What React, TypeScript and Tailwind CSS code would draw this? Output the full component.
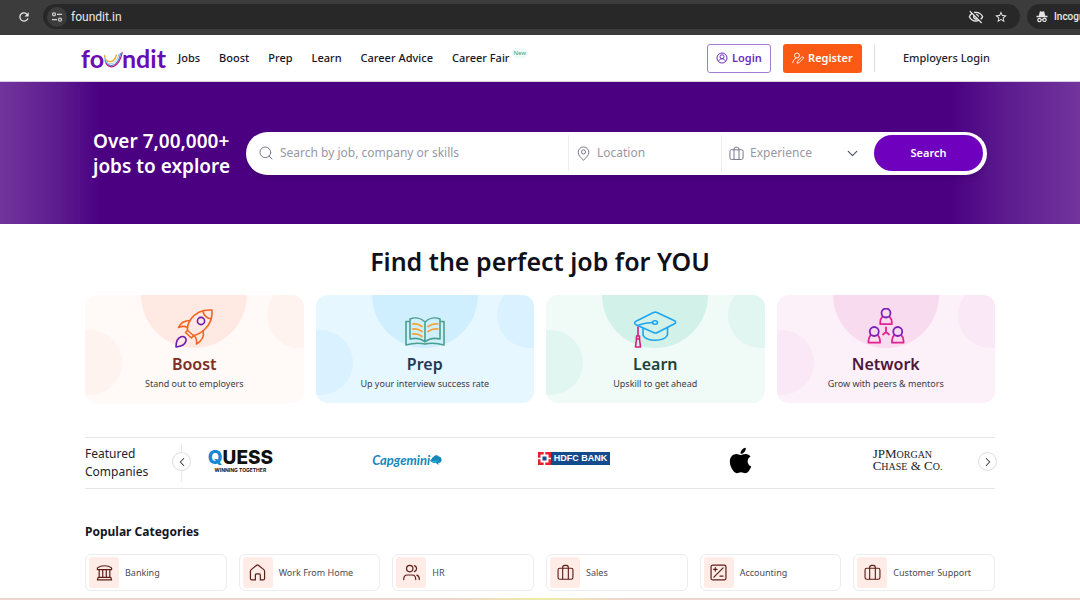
import type { ReactNode } from "react";
import { FaApple } from "react-icons/fa";
import { MdRefresh, MdOutlineVisibilityOff, MdStarBorder } from "react-icons/md";
import { Search, ChevronDown, ChevronLeft, ChevronRight } from "lucide-react";

function TuneIcon() {
  return (
    <svg viewBox="0 0 12 12" className="size-3" fill="none" stroke="#d4d4d4" strokeWidth="1.2" aria-hidden="true">
      <circle cx="3" cy="3.3" r="1.5" />
      <path d="M6 3.3h5M1 8.7h5" />
      <circle cx="9" cy="8.7" r="1.5" />
    </svg>
  );
}

function IncognitoIcon() {
  return (
    <svg viewBox="0 0 24 24" className="size-3" fill="#e4e4e4" aria-hidden="true">
      <path d="M7.500 1.500 5.600 9.500H1v2.800h22V9.500h-4.600l-1.900-8c-.2-.8-.9-1-1.600-.8L12 1.600 9.100.7c-.7-.2-1.400 0-1.600.8Z" />
      <path d="M7 13.500a4.500 4.500 0 1 0 4.300 5.300c.5-.2.900-.2 1.400 0a4.500 4.500 0 1 0 0-2.300c-.5-.2-.9-.2-1.400 0A4.500 4.500 0 0 0 7 13.500Zm0 2.300a2.100 2.100 0 1 1 0 4.200 2.100 2.100 0 0 1 0-4.200Zm10 0a2.100 2.100 0 1 1 0 4.200 2.100 2.100 0 0 1 0-4.200Z" />
    </svg>
  );
}

function BrowserBar() {
  return (
    <div className="flex h-[35px] items-start overflow-hidden bg-[#3c3c3c] pt-1 font-['Roboto',sans-serif] text-[#e8e8e8]">
      <button type="button" aria-label="Reload" className="flex h-[25px] w-[43px] shrink-0 items-center justify-center pl-1">
        <MdRefresh className="size-3.5" />
      </button>
      <div className="flex h-[25px] flex-1 items-center rounded-full bg-[#282828] pr-3 pl-1">
        <button type="button" aria-label="Site information" className="flex size-5 items-center justify-center rounded-full bg-[#3c3c3c]">
          <TuneIcon />
        </button>
        <input aria-label="Address" defaultValue="foundit.in" className="ml-1 min-w-0 flex-1 bg-transparent text-[12px] outline-none" />
        <button type="button" aria-label="Tracking blocked" className="mr-2.5">
          <MdOutlineVisibilityOff className="size-4" />
        </button>
        <button type="button" aria-label="Bookmark">
          <MdStarBorder className="size-3.5" />
        </button>
      </div>
      <div className="ml-[7px] flex h-[25px] w-[53px] shrink-0 items-center gap-1.5 overflow-hidden rounded-l-full bg-[#282828] pl-[9px]">
        <span className="shrink-0"><IncognitoIcon /></span>
        <span className="text-[10px] font-medium whitespace-nowrap">Incognito</span>
      </div>
    </div>
  );
}

function Logo() {
  return (
    <a href="#home" aria-label="foundit" className="flex w-[85px] items-center font-['Lato',sans-serif] text-[25px] leading-none font-bold text-[#6a0cb4]">
      <span>fo</span>
      <svg viewBox="0 0 20 18" className="-mx-px mt-1 h-[18px] w-5 shrink-0" fill="none" strokeLinecap="round" aria-hidden="true">
        <path d="M1.500 4.500c.5 7.500 9 9 12-.5" stroke="#f5a623" strokeWidth="1.300" />
        <path d="M1.500 7c1.500 7.500 11 9.500 14.500-4" stroke="#9bc7dd" strokeWidth="1" />
        <path d="M2 9.500c2.500 7 12.500 8 15.500-7" stroke="#2b8fe0" strokeWidth="1.100" />
        <path d="M3 12.500C7 18.500 16 16.500 19.200 1.500" stroke="#c21e8a" strokeWidth="1.200" />
      </svg>
      <span>ndit</span>
    </a>
  );
}

const links = ["Jobs", "Boost", "Prep", "Learn", "Career Advice", "Career Fair"];

function Header() {
  return (
    <header className="flex h-[47px] items-center justify-center border-b border-[#d9cfe6] bg-white">
      <div className="flex w-full max-w-[918px] items-center pr-[9px]">
        <Logo />
        <nav className="ml-3 flex gap-[19px] text-[11px] font-medium text-[#15151f]">
          {links.map((link) => (
            <a key={link} href={`#${link}`} className="whitespace-nowrap">{link}</a>
          ))}
        </nav>
        <span className="mb-2.5 ml-0.5 rounded-full bg-[#edfaf7] px-0.5 text-[6px] leading-[10px] text-[#3aa58a]">New</span>
        <div className="ml-auto flex items-center">
          <button type="button" className="flex h-[29px] w-16 items-center justify-center gap-1 rounded-[3px] border border-[#a57bd8] text-[11px] font-semibold text-[#6e2cbf]">
            <svg viewBox="0 0 24 24" className="size-3" fill="none" stroke="currentColor" strokeWidth="2" aria-hidden="true">
              <circle cx="12" cy="12" r="10" />
              <circle cx="12" cy="9.500" r="4" />
              <path d="M5 19c1-3.500 3.500-5.500 7-5.500s6 2 7 5.500" />
            </svg>
            Login
          </button>
          <button type="button" className="ml-3 flex h-[29px] w-[79px] items-center justify-center gap-1 rounded-[3px] bg-[#fb5a14] text-[11px] font-semibold text-white">
            <svg viewBox="0 0 24 24" className="size-3" fill="none" stroke="currentColor" strokeWidth="1.800" strokeLinecap="round" strokeLinejoin="round" aria-hidden="true">
              <circle cx="10" cy="7" r="5" />
              <path d="M1.500 21.500c.5-4.500 3-8 6.500-9M22.500 10.500c-1-1.200-2.300-1.200-3.300-.2L11 18.500l-1 4 4-1 8.300-8.200c.9-.9 1-1.900.2-2.800Z" />
            </svg>
            Register
          </button>
          <div className="ml-3 h-7 w-px bg-[#dddde2]" />
          <a href="#employers" className="ml-7 text-[11px] font-medium whitespace-nowrap text-[#24242e]">Employers Login</a>
        </div>
      </div>
    </header>
  );
}

function BagIcon({ className }: { className: string }) {
  return (
    <svg viewBox="0 0 24 24" className={className} fill="none" stroke="currentColor" strokeWidth="1.600" strokeLinejoin="round" aria-hidden="true">
      <rect x="1.500" y="6" width="21" height="15.500" rx="2.500" />
      <path d="M8 21.500V5a3 3 0 0 1 3-3h2a3 3 0 0 1 3 3v16.500" />
    </svg>
  );
}

function Hero() {
  return (
    <section className="flex h-[142px] items-center justify-center bg-[linear-gradient(90deg,#72359c_0,#5c1b8e_60px,#4b0082_100px,#4b0082_calc(100%_-_130px),#5c1b8e_calc(100%_-_75px),#72359c_100%)]">
      <form className="flex w-full max-w-[894px] items-center" onSubmit={(e) => e.preventDefault()}>
        <h2 className="w-[153px] shrink-0 pt-0.5 text-[19px] leading-[25px] font-semibold whitespace-nowrap text-white">
          Over 7,00,000+<br />jobs to explore
        </h2>
        <div className="flex h-[43px] flex-1 items-center rounded-full bg-white pr-1 pl-3 text-[12px] text-[#9797a5] shadow-md">
          <label className="flex min-w-0 flex-1 items-center gap-1.5">
            <Search className="size-4 shrink-0 text-[#77778a]" strokeWidth={1.500} />
            <input aria-label="Search by job, company or skills" placeholder="Search by job, company or skills" className="min-w-0 flex-1 outline-none placeholder:text-[#9797a5]" />
          </label>
          <label className="flex h-9 w-[153px] items-center gap-1.5 border-l border-[#ececf1] pl-[7px]">
            <svg viewBox="0 0 24 24" className="size-[15px] shrink-0 text-[#77778a]" fill="none" stroke="currentColor" strokeWidth="1.600" strokeLinejoin="round" aria-hidden="true">
              <path d="M12 1.500a8.500 8.500 0 0 0-8.500 8.500c0 5.500 5 8.500 8.500 13 3.500-4.500 8.500-7.500 8.500-13A8.500 8.500 0 0 0 12 1.500Z" />
              <circle cx="12" cy="9.500" r="3.300" />
            </svg>
            <input aria-label="Location" placeholder="Location" className="w-24 outline-none placeholder:text-[#9797a5]" />
          </label>
          <label className="flex h-9 w-[153px] items-center gap-1.5 border-l border-[#ececf1] pr-[13px] pl-[7px]">
            <BagIcon className="size-[15px] shrink-0 text-[#77778a]" />
            <select aria-label="Experience" className="min-w-0 flex-1 appearance-none bg-transparent outline-none">
              <option>Experience</option>
            </select>
            <ChevronDown className="size-[17px] shrink-0 text-[#4c4c60]" strokeWidth={1.600} />
          </label>
          <button type="submit" className="h-9 w-[109px] rounded-full bg-[#6e00be] text-[11px] font-semibold text-white">Search</button>
        </div>
      </form>
    </section>
  );
}

function RocketArt() {
  return (
    <svg viewBox="0 0 40 40" className="size-10" fill="none" stroke="#f26522" strokeWidth="1.600" strokeLinejoin="round" strokeLinecap="round" aria-hidden="true">
      <path d="M38 2c-9-.5-16 2-21 9-2.500 3.500-4 8-3.500 11.500l6 5c4-.5 8-3 11.500-6.500C37 15.500 38.500 9 38 2Z" />
      <path d="M29 3.500c.8 3.500 3.500 6.500 8 7.500M16 12.500C10 12.500 6.500 15 4.500 19.500c3.500-1.500 6.500-1.500 9 0M29 23c1.500 5-1 9.500-6.500 13 .5-3.500-.2-6.500-2.500-8.500M13.500 22.500l-2 2 6 5.500 2-2.500" />
      <g stroke="#6a1bb5">
        <circle cx="27" cy="13" r="3.600" />
        <path d="M2 39c0-5 1.500-9 5-10.200 3-1 5.800 1.200 5 4.200-1 3.500-5 5.500-10 6Z" />
      </g>
    </svg>
  );
}

function BookArt() {
  return (
    <svg viewBox="0 -2 40 40" className="size-10" fill="none" stroke="#4a9f8d" strokeWidth="1.600" strokeLinejoin="round" strokeLinecap="round" aria-hidden="true">
      <path d="M20 12c-4-4-10-5-15-3v20c6-1.500 11-.5 15 3 4-3.500 9-4.500 15-3V9c-5-2-11-1-15 3Zm0 0v20" />
      <path d="M4.500 11.500H1V35c7-2 14-2 19-1 5-1 12-1 19 1V11.500h-3.500" />
      <g stroke="#f3a12f" strokeWidth="1.700">
        <path d="M7.500 14c3.500-.5 7 .5 9.500 2.500M7.500 19c3.500-.5 7 .5 9.500 2.500M7.500 24c3.500-.5 7 .5 9.500 2.500M33 14c-3.500-.5-7 .5-10 2.500M33 19c-3.500-.5-7 .5-10 2.500" />
      </g>
    </svg>
  );
}

function CapArt() {
  return (
    <svg viewBox="0 0 44 40" className="h-10 w-11" fill="none" stroke="#1fa4ee" strokeWidth="1.600" strokeLinejoin="round" strokeLinecap="round" aria-hidden="true">
      <path d="M20.500 4.500c1.200-.5 2.300-.5 3.500 0l17 8c2.200 1 2.200 2.500 0 3.500l-16.500 8.500c-1.300.7-2.700.7-4 0L3.500 17c-2.500-1.200-2.500-3 0-4Z" />
      <path d="M10 20.500V27c3 7 21 7 24.500 0v-7M6 17c5-1.800 9-2.300 13.500-2.500" />
      <ellipse cx="22" cy="14.500" rx="2.500" ry="1.700" />
      <g stroke="#d61c80">
        <path d="M5 19v9M3.500 28h3v3l1 8h-5l1-8Zm0 3h3" />
      </g>
    </svg>
  );
}

function Person({ x, y }: { x: number; y: number }) {
  return (
    <g transform={`translate(${x} ${y})`}>
      <path d="M2 8.800C.7 10.200 0 12 0 14v2.200h11.500V14c0-2-.7-3.800-2-5.200" stroke="#e0218e" />
      <circle cx="5.750" cy="5" r="4.500" stroke="#7a22b8" />
    </g>
  );
}

function NetworkArt() {
  return (
    <svg viewBox="0 0 40 40" className="size-10" fill="none" strokeWidth="1.800" strokeLinejoin="round" strokeLinecap="round" aria-hidden="true">
      <Person x={14.250} y={0} />
      <Person x={2.500} y={18.500} />
      <Person x={26} y={18.500} />
      <path d="M20 19.500V24M20 24l-3 2.500M20 24l3 2.500" stroke="#e0218e" />
    </svg>
  );
}

const cards = [
  { title: "Boost", text: "Stand out to employers", art: <RocketArt />, bg: "bg-[#fff9f7]", top: "bg-[#ffe9e2]", side: "bg-[#fff3ef]", color: "text-[#7b2e25]" },
  { title: "Prep", text: "Up your interview success rate", art: <BookArt />, bg: "bg-[#e7f7ff]", top: "bg-[#d0effe]", side: "bg-[#daf2ff]", color: "text-[#213a55]" },
  { title: "Learn", text: "Upskill to get ahead", art: <CapArt />, bg: "bg-[#f0faf7]", top: "bg-[#d1f1e9]", side: "bg-[#e2f6f1]", color: "text-[#1b4636]" },
  { title: "Network", text: "Grow with peers & mentors", art: <NetworkArt />, bg: "bg-[#fcf0f9]", top: "bg-[#f9dbf0]", side: "bg-[#fae8f6]", color: "text-[#4e1537]" },
];

function FeatureCards() {
  return (
    <div className="mt-[17px] grid grid-cols-4 gap-3">
      {cards.map((card) => (
        <a key={card.title} href={`#${card.title}`} className={`relative flex h-[108px] flex-col items-center overflow-hidden rounded-xl ${card.bg}`}>
          <span className={`absolute -top-[53px] left-1/2 size-[106px] -translate-x-1/2 rounded-full ${card.top}`} />
          <span className={`absolute top-[35px] -left-7 size-[65px] rounded-full ${card.side}`} />
          <span className={`absolute -top-3 -right-7 size-[65px] rounded-full ${card.side}`} />
          <span className="relative mt-[13px]">{card.art}</span>
          <h3 className={`relative mt-[5px] text-[16px] leading-[22px] font-semibold ${card.color}`}>{card.title}</h3>
          <p className="relative mt-0.5 text-[9px] leading-[14px] text-[#3c3c46]">{card.text}</p>
        </a>
      ))}
    </div>
  );
}

function QuessLogo() {
  return (
    <div className="flex flex-col items-center font-['Inter',sans-serif] text-[#111]">
      <span className="text-[19px] leading-[19px] font-extrabold"><span className="text-[#1787d4]">Q</span>UESS</span>
      <span className="text-[5px] leading-[6px] font-bold">WINNING TOGETHER</span>
    </div>
  );
}

function CapgeminiLogo() {
  return (
    <div className="flex items-center font-['Lato',sans-serif] text-[13px] leading-4 font-bold text-[#1787b8] italic">
      Capgemini
      <svg viewBox="0 0 14 12" className="h-3 w-3" aria-hidden="true">
        <path d="M0 6.500C2 6.500 2 3 4.500 2 6 0 9 .2 10 1.800c2.500.2 3.800 2 3.500 4.200-.2 2.500-2 3.700-4 3.300C9.800 10.500 10.500 11 11 11.200 9 11.800 7.500 10.500 7.200 9.300 4 10 1.500 8.500 0 6.500Z" fill="#1787b8" />
        <path d="M1 6.500c3 1 6 1 9-1-1 3-5 4.500-9 1Z" fill="#19b5e8" />
      </svg>
    </div>
  );
}

function HdfcLogo() {
  return (
    <div className="mb-1 flex h-[13px] items-center bg-[#144b8c] font-['Liberation_Sans',sans-serif] text-[9px] leading-none font-bold text-white">
      <svg viewBox="0 0 13 13" className="mr-[3px] size-[13px]" aria-hidden="true">
        <path d="M0 0h13v13H0Z" fill="#e3202b" />
        <path d="M5.700 0h1.600v13H5.700ZM0 5.700h13v1.600H0Z" fill="#fff" />
        <path d="M2.500 2.500h8v8h-8Z" fill="#fff" />
        <path d="M4.500 4.500h4v4h-4Z" fill="#144b8c" />
      </svg>
      <span className="mr-[3px] whitespace-nowrap">HDFC BANK</span>
    </div>
  );
}

function MorganLogo() {
  return (
    <div className="font-['Liberation_Serif',serif] text-[13px] leading-[11px] whitespace-nowrap text-[#222]">
      JPM<span className="text-[10px]">ORGAN</span><br />
      C<span className="text-[10px]">HASE</span> &amp; C<span className="text-[10px]">O.</span>
    </div>
  );
}

const companies: { name: string; logo: ReactNode }[] = [
  { name: "Quess", logo: <QuessLogo /> },
  { name: "Capgemini", logo: <CapgeminiLogo /> },
  { name: "HDFC Bank", logo: <HdfcLogo /> },
  { name: "Apple", logo: <FaApple className="size-[29px] text-black" /> },
  { name: "JPMorgan Chase", logo: <MorganLogo /> },
];

function Companies() {
  return (
    <section className="relative mt-[34px] flex h-[52px] items-center border-y border-[#e6e6ea]">
      <h3 className="w-[72px] shrink-0 text-[12px] leading-[18px] text-[#24242e]">Featured Companies</h3>
      <div className="absolute inset-y-1.5 left-24 w-px bg-[#e8e8ec]" />
      <button type="button" aria-label="Previous companies" className="absolute top-3.5 left-[87px] z-10 flex size-[19px] items-center justify-center rounded-full border border-[#dddde2] bg-white">
        <ChevronLeft className="size-3.5 text-[#33333d]" strokeWidth={1.800} />
      </button>
      <ul className="mr-1 mb-1.5 grid flex-1 grid-cols-5">
        {companies.map((company) => (
          <li key={company.name} className="flex items-center justify-center">{company.logo}</li>
        ))}
      </ul>
      <button type="button" aria-label="Next companies" className="absolute top-3.5 -right-0.5 flex size-[19px] items-center justify-center rounded-full border border-[#dddde2] bg-white">
        <ChevronRight className="size-3.5 text-[#33333d]" strokeWidth={1.800} />
      </button>
    </section>
  );
}

function LineIcon({ children }: { children: ReactNode }) {
  return (
    <svg viewBox="0 0 24 24" className="size-[17px]" fill="none" stroke="currentColor" strokeWidth="1.700" strokeLinejoin="round" strokeLinecap="round" aria-hidden="true">
      {children}
    </svg>
  );
}

const categories: { name: string; icon: ReactNode }[] = [
  { name: "Banking", icon: <LineIcon><path d="M2 8V5.500C7 1.500 17 1.500 22 5.500V8ZM4.500 8v11M9.500 8v11M14.500 8v11M19.500 8v11M3 19h18l1 3.500H2Z" /></LineIcon> },
  { name: "Work From Home", icon: <LineIcon><path d="M9 22.500H4a2 2 0 0 1-2-2V10.200a3 3 0 0 1 1.100-2.300L10.400 2a2.500 2.500 0 0 1 3.200 0l7.300 5.900a3 3 0 0 1 1.100 2.300v10.300a2 2 0 0 1-2 2h-4v-7a1.500 1.500 0 0 0-1.500-1.500h-4A1.500 1.500 0 0 0 9 15.500Z" /></LineIcon> },
  { name: "HR", icon: <LineIcon><circle cx="9.500" cy="6.500" r="4.500" /><path d="M16 2.200a4.500 4.500 0 0 1 0 8.600M1 22c0-4.500 1.500-6.500 5-6.500h7c3.500 0 5 2 5 6.500M19.500 15.800c2.500.7 3.500 2.700 3.500 6.200" /></LineIcon> },
  { name: "Sales", icon: <BagIcon className="size-[17px]" /> },
  { name: "Accounting", icon: <LineIcon><rect x="1.500" y="1.500" width="21" height="21" rx="2.500" /><path d="M5.500 18.500l13-13M5 7.500h5M7.500 5v5M14 17h4.500" /></LineIcon> },
  { name: "Customer Support", icon: <BagIcon className="size-[17px]" /> },
];

function Categories() {
  return (
    <section className="mt-[34px]">
      <h3 className="text-[12px] leading-[18px] font-bold text-[#15151f]">Popular Categories</h3>
      <div className="mt-[13px] grid grid-cols-6 gap-3">
        {categories.map((category) => (
          <a key={category.name} href={`#${category.name}`} className="flex h-[37px] items-center gap-1.5 rounded-md border border-[#ececf0] px-[3px]">
            <span className="flex h-[31px] w-[30px] items-center justify-center rounded-[3px] bg-[#ffece6] text-[#5f1d18]">{category.icon}</span>
            <span className="text-[9px] whitespace-nowrap text-[#4a4a55]">{category.name}</span>
          </a>
        ))}
      </div>
    </section>
  );
}

export default function App() {
  return (
    <div className="flex min-h-screen flex-col bg-white font-['Noto_Sans',sans-serif]">
      <BrowserBar />
      <Header />
      <Hero />
      <main className="mx-auto w-full max-w-[910px] pt-5">
        <h1 className="text-center text-[25px] leading-[34px] font-semibold text-[#10101a]">Find the perfect job for YOU</h1>
        <FeatureCards />
        <Companies />
        <Categories />
      </main>
      <div className="mt-auto h-0.5 bg-[linear-gradient(90deg,#ecd6cf_0%,#ecd6cf_42%,#eeeba6_50%,#ecd6cf_58%,#ecd6cf_100%)]" />
    </div>
  );
}
